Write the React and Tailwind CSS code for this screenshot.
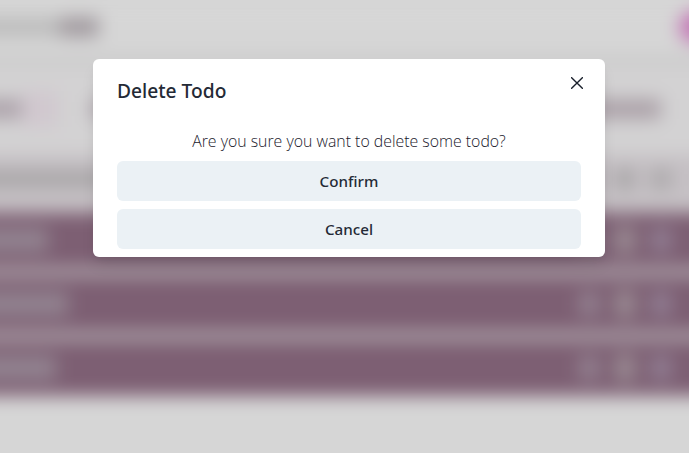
function TodoRow({ textWidth }) {
  return (
    <div className="flex h-14 shrink-0 items-center bg-[#7d5f73] pr-[66px]">
      <div className={`h-6 bg-[#928390] ${textWidth}`} />
      <div className="ml-auto flex items-center gap-4">
        <div className="h-6 w-5 bg-[#938190]" />
        <div className="h-7 w-5 bg-[#998a92]" />
        <div className="h-6 w-5 bg-[#917e93]" />
      </div>
    </div>
  );
}

function Background() {
  return (
    <div className="-mx-12 flex w-[785px] flex-col blur-[9px]">
      <div className="flex h-[57px] shrink-0 items-center bg-[#d6d6d6] pb-1">
        <div className="h-[20px] w-[108px] bg-[#bdbdbd]" />
        <div className="h-[20px] w-[39px] bg-[#a19a9f]" />
        <div className="ml-auto h-8 w-[58px] rounded-full bg-[#c477b6]" />
      </div>
      <div className="h-[6px] shrink-0 bg-[#c4c4c4]" />
      <div className="flex h-[92px] shrink-0 items-center bg-[#d3d2d3]">
        <div className="h-[20px] w-[70px] bg-[#ada3ab]" />
        <div className="h-9 w-9 bg-[#d1c8cf]" />
        <div className="ml-8 h-4 w-12 bg-[#b0a6ae]" />
        <div className="ml-auto mr-[76px] h-[20px] w-28 bg-[#aba1a8]" />
      </div>
      <div className="flex h-[48px] shrink-0 items-center bg-[#c5c0c4] pr-[66px]">
        <div className="h-[18px] w-[160px] bg-[#aaa7a9]" />
        <div className="ml-auto flex gap-4">
          <div className="h-5 w-5 bg-[#a9a6a8]" />
          <div className="h-5 w-5 bg-[#a9a6a8]" />
          <div className="h-5 w-5 bg-[#aca9ab]" />
        </div>
      </div>
      <div className="h-[9px] shrink-0 bg-[#cac8ca]" />
      <div className="flex flex-col gap-2 bg-[#bcb8bb]">
        <TodoRow textWidth="w-24" />
        <TodoRow textWidth="w-[116px]" />
        <TodoRow textWidth="w-[104px]" />
      </div>
      <div className="h-24 shrink-0 bg-[#d6d6d6]" />
    </div>
  );
}

export default function App() {
  return (
    <div className="relative h-[453px] w-[689px] overflow-hidden bg-[#d6d6d6] font-['Noto_Sans','Open_Sans',sans-serif] text-[#1a202c]">
      <Background />
      <div role="dialog" aria-modal="true" className="absolute top-[59px] left-[93px] flex h-[198px] w-[512px] flex-col rounded-md bg-white px-6 pt-4 pb-2 shadow-[0_10px_15px_-3px_rgba(0,0,0,0.1),0_4px_6px_-2px_rgba(0,0,0,0.05)]">
        <header className="flex h-8 items-center justify-between">
          <h2 className="text-[19.2px] leading-8 font-medium text-[#242a36]">Delete Todo</h2>
          <button aria-label="Close" className="-mt-4 -mr-3 flex h-8 w-8 items-center justify-center">
            <svg viewBox="0 0 12 12" className="h-3 w-3" fill="none" stroke="currentColor" strokeWidth="1.4" strokeLinecap="round">
              <path d="M.65.65l10.7 10.7M11.35.65L.65 11.35" />
            </svg>
          </button>
        </header>
        <p className="mt-[22px] mb-2 text-center font-['Open_Sans','Noto_Sans',sans-serif] text-[15.85px] leading-6 font-light">Are you sure you want to delete some todo?</p>
        <div className="flex flex-col gap-2">
          <button className="h-10 rounded-md bg-[#ebf1f5] text-[15.2px] font-medium text-[#242a36]">Confirm</button>
          <button className="h-10 rounded-md bg-[#ebf1f5] text-[15.2px] font-medium text-[#242a36]">Cancel</button>
        </div>
      </div>
    </div>
  );
}
